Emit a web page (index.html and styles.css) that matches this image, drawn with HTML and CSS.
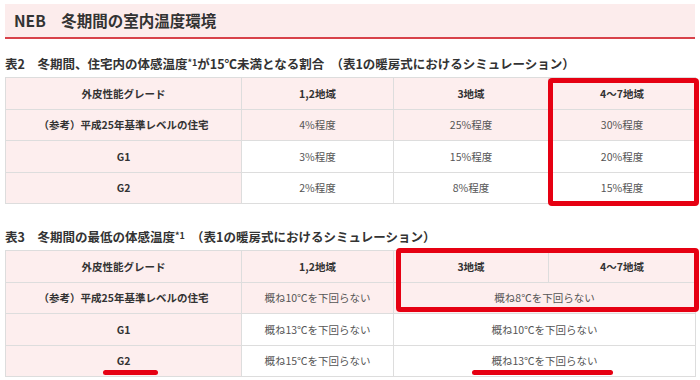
FILE: index.html
```html
<!DOCTYPE html>
<html lang="ja">
<head>
<meta charset="utf-8">
<link rel="stylesheet" href="styles.css">
</head>
<body>
<h1 class="title">NEB　冬期間の室内温度環境</h1>

<p class="caption caption-first">表2　冬期間、住宅内の体感温度<span class="note">*1</span>が15℃未満となる割合　（表1の暖房式におけるシミュレーション）</p>
<div class="table-wrap">
  <table class="grid">
    <colgroup><col class="c1"><col class="c2"><col class="c3"><col class="c4"></colgroup>
    <tr class="pink"><th>外皮性能グレード</th><th>1,2地域</th><th>3地域</th><th>4～7地域</th></tr>
    <tr class="pink"><th>（参考）平成25年基準レベルの住宅</th><td>4%程度</td><td>25%程度</td><td>30%程度</td></tr>
    <tr><th>G1</th><td>3%程度</td><td>15%程度</td><td>20%程度</td></tr>
    <tr><th>G2</th><td>2%程度</td><td>8%程度</td><td>15%程度</td></tr>
  </table>
  <div class="mark mark-t2"></div>
</div>

<p class="caption caption-second">表3　冬期間の最低の体感温度<span class="note">*1</span>　（表1の暖房式におけるシミュレーション）</p>
<div class="table-wrap">
  <table class="grid">
    <colgroup><col class="c1"><col class="c2"><col class="c3"><col class="c4"></colgroup>
    <tr class="pink"><th>外皮性能グレード</th><th>1,2地域</th><th>3地域</th><th>4～7地域</th></tr>
    <tr class="pink"><th>（参考）平成25年基準レベルの住宅</th><td>概ね10℃を下回らない</td><td colspan="2">概ね8℃を下回らない</td></tr>
    <tr><th>G1</th><td>概ね13℃を下回らない</td><td colspan="2">概ね10℃を下回らない</td></tr>
    <tr><th>G2</th><td>概ね15℃を下回らない</td><td colspan="2">概ね13℃を下回らない</td></tr>
  </table>
  <div class="mark mark-t3"></div>
  <div class="underline ul-g2"></div>
  <div class="underline ul-13"></div>
</div>
</body>
</html>
```
FILE: styles.css
```css
html, body {
  margin: 0;
  padding: 0;
  background: #ffffff;
}
body {
  padding: 4px 5px 0 5px;
  font-family: "Noto Sans CJK JP", "Noto Sans", sans-serif;
  color: #333333;
}
.title {
  margin: 0;
  height: 33px;
  line-height: 33px;
  padding-left: 9px;
  background: #fcecec;
  border-bottom: 2px solid #d8424a;
  font-size: 15.5px;
  font-weight: bold;
  color: #333333;
}
.caption {
  margin: 0;
  height: 16px;
  line-height: 16px;
  font-size: 12.5px;
  font-weight: bold;
  color: #333333;
  white-space: nowrap;
}
.caption-first {
  margin-top: 16px;
  margin-bottom: 6px;
}
.caption-second {
  margin-top: 24px;
  margin-bottom: 6px;
}
.note {
  font-size: 9px;
  vertical-align: 3px;
}
.table-wrap {
  position: relative;
  width: 690px;
}
.grid {
  width: 690px;
  border-collapse: collapse;
  table-layout: fixed;
  font-size: 10.5px;
}
.c1 { width: 236px; }
.c2 { width: 152px; }
.c3 { width: 155px; }
.c4 { width: 147px; }
.grid th, .grid td {
  border: 1px solid #dddddd;
  height: 31.5px;
  padding: 0;
  text-align: center;
  vertical-align: middle;
  box-sizing: border-box;
}
.grid th {
  background: #fdeeee;
  font-weight: bold;
  color: #333333;
}
.grid td {
  background: #ffffff;
  font-weight: normal;
  color: #555555;
}
.grid tr.pink td {
  background: #fdeeee;
}
.mark {
  position: absolute;
  border: 5px solid #e60012;
  border-radius: 4px;
  box-sizing: border-box;
}
.mark-t2 {
  left: 543px;
  top: 1px;
  width: 151px;
  height: 128px;
}
.mark-t3 {
  left: 391px;
  top: -2px;
  width: 303px;
  height: 64px;
}
.underline {
  position: absolute;
  height: 5px;
  border-radius: 3px;
  background: #e60012;
}
.ul-g2 {
  left: 98px;
  top: 120px;
  width: 55px;
}
.ul-13 {
  left: 467px;
  top: 120px;
  width: 141px;
}
```
